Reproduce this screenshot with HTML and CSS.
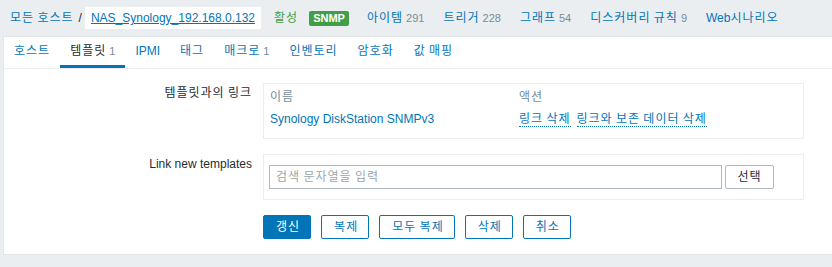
FILE: index.html
```html
<!DOCTYPE html>
<html lang="ko">
<head>
    <meta charset="UTF-8">
    <meta name="viewport" content="width=device-width, initial-scale=1.0">
    <title>호스트 템플릿</title>
    <link rel="stylesheet" href="styles.css">
</head>
<body>
    <header class="host-nav">
        <ul class="breadcrumbs">
            <li class="ko"><a href="#">모든 호스트</a></li>
            <li class="sep">/</li>
            <li class="selected"><a href="#">NAS_Synology_192.168.0.132</a></li>
        </ul>
        <ul class="host-items">
            <li class="status-on ko">활성</li>
            <li class="badge-item"><span class="badge">SNMP</span></li>
            <li class="first-link"><a href="#" class="ko">아이템</a><sup class="count">291</sup></li>
            <li><a href="#" class="ko">트리거</a><sup class="count">228</sup></li>
            <li><a href="#" class="ko">그래프</a><sup class="count">54</sup></li>
            <li><a href="#" class="ko">디스커버리 규칙</a><sup class="count">9</sup></li>
            <li><a href="#">Web<span class="ko">시나리오</span></a></li>
        </ul>
    </header>

    <main class="panel">
        <ul class="tabs">
            <li><a href="#" class="ko">호스트</a></li>
            <li class="active"><a href="#" class="ko">템플릿</a><sup class="count">1</sup></li>
            <li><a href="#">IPMI</a></li>
            <li><a href="#" class="ko">태그</a></li>
            <li><a href="#" class="ko">매크로</a><sup class="count">1</sup></li>
            <li><a href="#" class="ko">인벤토리</a></li>
            <li><a href="#" class="ko">암호화</a></li>
            <li><a href="#" class="ko">값 매핑</a></li>
        </ul>

        <form class="form-list">
            <div class="row">
                <div class="label ko">템플릿과의 링크</div>
                <div class="box link-box">
                    <table class="linked">
                        <tr>
                            <th class="col-name ko">이름</th>
                            <th class="ko">액션</th>
                        </tr>
                        <tr>
                            <td><a href="#">Synology DiskStation SNMPv3</a></td>
                            <td><a href="#" class="link-action ko">링크 삭제</a><a href="#" class="link-action ko">링크와 보존 데이터 삭제</a></td>
                        </tr>
                    </table>
                </div>
            </div>

            <div class="row">
                <div class="label">Link new templates</div>
                <div class="box search-box">
                    <input type="text" class="search" placeholder="검색 문자열을 입력">
                    <button type="button" class="btn-grey ko">선택</button>
                </div>
            </div>

            <div class="row">
                <div class="label"></div>
                <div class="buttons">
                    <button type="button" class="btn btn-main ko">갱신</button>
                    <button type="button" class="btn ko">복제</button>
                    <button type="button" class="btn ko">모두 복제</button>
                    <button type="button" class="btn ko">삭제</button>
                    <button type="button" class="btn ko">취소</button>
                </div>
            </div>
        </form>
    </main>
</body>
</html>
```

FILE: styles.css
```css
body{
    margin: 0;
    background: #ebeef0;
    color: #1f2c33;
    font: 12px/14px "Liberation Sans", "Noto Sans CJK KR", sans-serif;
}
a{
    color: #0275b8;
    text-decoration: none;
}
ul{
    list-style: none;
    margin: 0;
    padding: 0;
}
.ko,
.search::placeholder{
    letter-spacing: 1px;
    word-spacing: -1px;
}
.count{
    color: #768d99;
    font-size: 11px;
    vertical-align: baseline;
    margin-left: 3px;
}

/* host header */
.host-nav{
    display: flex;
    align-items: center;
    height: 36px;
    padding-left: 10px;
}
.breadcrumbs{
    display: flex;
    align-items: center;
}
.breadcrumbs .sep{
    margin: 0 3px 0 5px;
}
.breadcrumbs .selected{
    background: #fff;
    padding: 4px 6px;
}
.breadcrumbs .selected a{
    text-decoration: underline;
}
.host-items{
    display: flex;
    align-items: center;
    margin-left: 13px;
}
.host-items li{
    margin-left: 19px;
}
.host-items li.status-on{
    margin-left: 0;
    color: #429e47;
}
.host-items li.badge-item{
    margin-left: 11px;
}
.host-items li.first-link{
    margin-left: 18px;
}
.badge{
    display: inline-block;
    background: #429e47;
    color: #fff;
    font-size: 11px;
    font-weight: bold;
    line-height: 15px;
    padding: 0 4px;
    border-radius: 2px;
}

/* panel */
.panel{
    margin-left: 3px;
    background: #fff;
    border: 1px solid #e1e5e8;
    border-right: 0;
    padding-bottom: 15px;
}
.tabs{
    display: flex;
    border-bottom: 1px solid #ebeef0;
}
.tabs li{
    padding: 0 10px;
    line-height: 28px;
    border-bottom: 3px solid transparent;
}
.tabs li.active{
    border-bottom-color: #0275b8;
}
.tabs li.active a{
    color: #1f2c33;
}

/* form */
.form-list{
    padding-top: 14px;
}
.row{
    display: flex;
    margin-bottom: 15px;
}
.row:last-child{
    margin-bottom: 0;
}
.label{
    width: 259px;
    box-sizing: border-box;
    padding: 3px 11px 0 0;
    text-align: right;
}
.box{
    width: 541px;
    box-sizing: border-box;
    border: 1px solid #ebeef0;
}
.link-box{
    padding: 0 6px 6px;
}
.linked{
    border-collapse: collapse;
}
.linked th{
    text-align: left;
    font-weight: normal;
    color: #768d99;
    padding: 6px 0 4px;
}
.linked td{
    padding: 4px 0 6px;
}
.linked .col-name{
    width: 249px;
}
.link-action{
    border-bottom: 1px dotted #0275b8;
}
.link-action + .link-action{
    margin-left: 6px;
}
.search-box{
    display: flex;
    gap: 3px;
    padding: 10px 5px;
}
.search{
    width: 453px;
    height: 24px;
    box-sizing: border-box;
    border: 1px solid #acbbc2;
    padding: 0 6px;
    margin: 0;
    font: inherit;
    color: #1f2c33;
}
.search::placeholder{
    color: #9aa7ae;
}
.btn-grey{
    width: 49px;
    height: 24px;
    margin: 0;
    border: 1px solid #acbbc2;
    border-radius: 2px;
    background: #fff;
    color: #1f2c33;
    font: inherit;
}
.buttons{
    display: flex;
    gap: 10px;
}
.btn{
    height: 24px;
    margin: 0;
    padding: 0 10px 0 12px;
    border: 1px solid #0275b8;
    border-radius: 2px;
    background: #fff;
    color: #0275b8;
    font: inherit;
    line-height: 22px;
}
.btn-main{
    background: #0275b8;
    color: #fff;
}
```
